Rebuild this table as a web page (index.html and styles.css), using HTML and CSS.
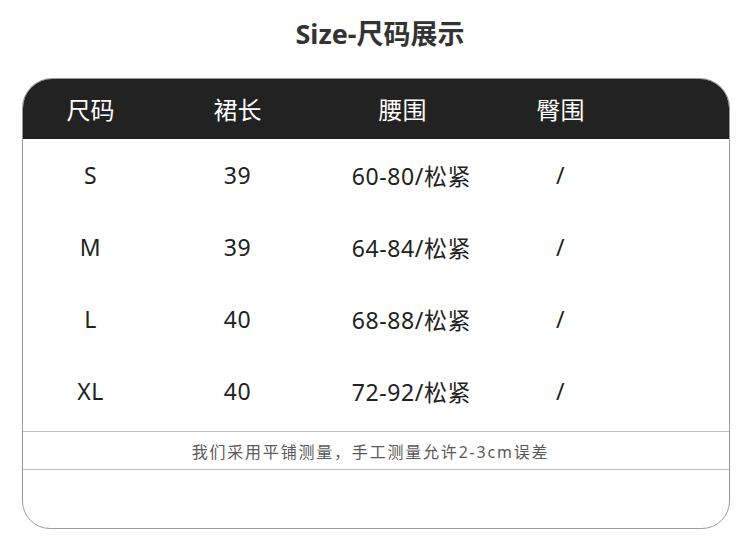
FILE: index.html
```html
<!DOCTYPE html>
<html lang="zh">
<head>
<meta charset="utf-8">
<title>Size-尺码展示</title>
<link rel="stylesheet" href="styles.css">
</head>
<body>
<div class="page">
  <h1 class="title">Size-尺码展示</h1>
  <div class="card">
    <div class="row head">
      <div class="cell">尺码</div>
      <div class="cell">裙长</div>
      <div class="cell c3">腰围</div>
      <div class="cell">臀围</div>
    </div>
    <div class="body">
      <div class="row data">
        <div class="cell">S</div>
        <div class="cell">39</div>
        <div class="cell">60-80/松紧</div>
        <div class="cell">/</div>
      </div>
      <div class="row data">
        <div class="cell">M</div>
        <div class="cell">39</div>
        <div class="cell">64-84/松紧</div>
        <div class="cell">/</div>
      </div>
      <div class="row data">
        <div class="cell">L</div>
        <div class="cell">40</div>
        <div class="cell">68-88/松紧</div>
        <div class="cell">/</div>
      </div>
      <div class="row data">
        <div class="cell">XL</div>
        <div class="cell">40</div>
        <div class="cell">72-92/松紧</div>
        <div class="cell">/</div>
      </div>
    </div>
    <div class="note">我们采用平铺测量，手工测量允许2-3cm误差</div>
    <div class="foot"></div>
  </div>
</div>
</body>
</html>
```
FILE: styles.css
```css
html, body {
  margin: 0;
  padding: 0;
  background: #fff;
}
body {
  font-family: "Noto Sans", "Noto Sans CJK SC", sans-serif;
  color: #222;
}
.page {
  width: 750px;
  height: 558px;
  display: flex;
  flex-direction: column;
  align-items: center;
}
.title {
  margin: 0;
  height: 78px;
  display: flex;
  align-items: center;
  justify-content: center;
  padding-left: 10px;
  padding-bottom: 14px;
  box-sizing: border-box;
  font-size: 27px;
  font-weight: 700;
  color: #333;
}
.card {
  width: 708px;
  margin-left: 1px;
  border: 1px solid #9a9a9a;
  border-radius: 30px 30px 28px 28px;
  overflow: hidden;
  box-sizing: border-box;
}
.row {
  display: grid;
  grid-template-columns: 136px 158px 190px 108px 1fr;
  align-items: center;
}
.cell {
  text-align: center;
}
.head {
  background: #222;
  color: #fff;
  height: 60px;
  font-size: 24px;
  padding-bottom: 1px;
  box-sizing: border-box;
}
.head .c3 {
  padding-right: 18px;
}
.body {
  display: flex;
  flex-direction: column;
  padding-bottom: 4px;
}
.data {
  height: 72px;
  font-size: 23px;
  letter-spacing: 0.6px;
  color: #222;
}
.note {
  height: 37px;
  border-top: 1px solid #bdbdbd;
  border-bottom: 1px solid #bdbdbd;
  display: flex;
  align-items: center;
  justify-content: center;
  font-size: 16px;
  letter-spacing: 1.8px;
  color: #5a5a5a;
  padding-right: 10px;
}
.foot {
  height: 58px;
}
```
